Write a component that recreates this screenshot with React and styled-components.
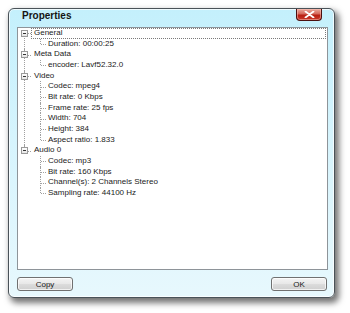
import styled, { createGlobalStyle } from "styled-components"

const ROW = 32 / 3

const groups = [
    { label: 'General', selected: true, items: ['Duration: 00:00:25'] },
    { label: 'Meta Data', items: ['encoder: Lavf52.32.0'] },
    { label: 'Video', items: ['Codec: mpeg4', 'Bit rate: 0 Kbps', 'Frame rate: 25 fps', 'Width: 704', 'Height: 384', 'Aspect ratio: 1.833'] },
    { label: 'Audio 0', items: ['Codec: mp3', 'Bit rate: 160 Kbps', 'Channel(s): 2 Channels Stereo', 'Sampling rate: 44100 Hz'] },
]

export default function App(){
    return (<Stage>
        <Global />
        <Window>
            <TitleBar>
                <Title>Properties</Title>
                <CloseButton>
                    <svg width="11" height="7" viewBox="0 0 11 7">
                        <path d="M1.5 0.5 L9.5 6.5 M9.5 0.5 L1.5 6.5" stroke="#fff" strokeWidth="1.8" strokeLinecap="round" />
                    </svg>
                </CloseButton>
            </TitleBar>
            <Panel>
                {groups.map((g, gi) => (
                    <Group key={g.label} $first={gi === 0} $last={gi === groups.length - 1}>
                        <Header>
                            <Expander />
                            <HeaderLabel $selected={g.selected}>{g.label}</HeaderLabel>
                        </Header>
                        {g.items.map((it, ii) => (
                            <Leaf key={it} $last={ii === g.items.length - 1}>{it}</Leaf>
                        ))}
                    </Group>
                ))}
            </Panel>
            <Buttons>
                <Button>Copy</Button>
                <Button>OK</Button>
            </Buttons>
        </Window>
    </Stage>);
}

const Global = createGlobalStyle`
body {
    margin: 0;
    background: #ffffff;
    font-family: "Liberation Sans", Arial, sans-serif;
}
`

const Stage = styled.div`
width: 350px;
height: 313px;
padding: 8px 0 0 8px;
box-sizing: border-box;
`

const Window = styled.div`
display: flex;
flex-direction: column;
box-sizing: border-box;
width: 327px;
height: 290px;
padding: 0 6px 6px 8px;

border: 1px solid #4a5258;
border-radius: 6px;
background: linear-gradient(180deg, #c4f0fc 0%, #d6f4fd 45%, #e7f8fd 100%);
box-shadow: inset 0 0 0 1px rgba(255, 255, 255, 0.75), 3px 4px 6px 1px rgba(0, 0, 0, 0.55);
`

const TitleBar = styled.div`
display: flex;
flex-direction: row;
justify-content: space-between;
align-items: flex-start;
height: 18px;
`

const Title = styled.div`
padding-left: 5px;
margin-top: 1px;
font-weight: 700;
font-size: 10px;
line-height: 12px;
color: #141414;
`

const CloseButton = styled.div`
display: flex;
align-items: center;
justify-content: center;
box-sizing: border-box;
width: 26px;
height: 12px;
margin-right: 6px;

border: 1px solid #4a1010;
border-top: none;
border-radius: 0 0 4px 4px;
background: linear-gradient(180deg, #e9a99c 0%, #d4675a 45%, #b81f12 55%, #c8392a 100%);
box-shadow: inset 0 0 0 1px rgba(255, 200, 190, 0.5);
`

const Panel = styled.div`
flex: 1;
box-sizing: border-box;
border: 1px solid #8e9499;
background: #ffffff;
overflow: hidden;
font-size: 8px;
color: #1a1a1a;
`

const Group = styled.div`
position: relative;

&::before {
    content: "";
    position: absolute;
    left: 6px;
    top: ${p => p.$first ? ROW / 2 : 0}px;
    ${p => p.$last ? `height: ${ROW / 2}px;` : 'bottom: 0;'}
    border-left: 1px dotted #a0a0a0;
}
`

const Header = styled.div`
position: relative;
display: flex;
flex-direction: row;
height: ${ROW}px;
padding-left: 13px;

&::before {
    content: "";
    position: absolute;
    left: 7px;
    top: ${ROW / 2}px;
    width: 6px;
    border-top: 1px dotted #a0a0a0;
}
`

const Expander = styled.span`
position: absolute;
left: 3px;
top: 2px;
box-sizing: border-box;
width: 7px;
height: 7px;
border: 1px solid #9a9a9a;
background: linear-gradient(180deg, #ffffff, #e6e6e6);
z-index: 1;

&::after {
    content: "";
    position: absolute;
    left: 1px;
    top: 2px;
    width: 3px;
    border-top: 1px solid #333;
}
`

const HeaderLabel = styled.div`
flex: 1;
box-sizing: border-box;
padding-left: 2px;
margin-right: 1px;
line-height: ${ROW - 2}px;
border: 1px ${p => p.$selected ? 'dotted #7a7a7a' : 'solid transparent'};
`

const Leaf = styled.div`
position: relative;
height: ${ROW}px;
line-height: ${ROW}px;
padding-left: 30px;
white-space: nowrap;

&::before {
    content: "";
    position: absolute;
    left: 22px;
    top: 0;
    height: ${p => p.$last ? ROW / 2 : ROW}px;
    border-left: 1px dotted #a0a0a0;
}

&::after {
    content: "";
    position: absolute;
    left: 23px;
    top: ${ROW / 2}px;
    width: 5px;
    border-top: 1px dotted #a0a0a0;
}
`

const Buttons = styled.div`
display: flex;
flex-direction: row;
justify-content: space-between;
margin-top: 7px;
padding-right: 1px;
`

const Button = styled.div`
display: flex;
align-items: center;
justify-content: center;
box-sizing: border-box;
width: 56px;
height: 14px;

border: 1px solid #707070;
border-radius: 3px;
background: linear-gradient(180deg, #f4f4f4 0%, #e8e8e8 48%, #dcdcdc 52%, #cfcfcf 100%);
box-shadow: inset 0 0 0 1px rgba(255, 255, 255, 0.7);
font-size: 8px;
color: #1a1a1a;
`
